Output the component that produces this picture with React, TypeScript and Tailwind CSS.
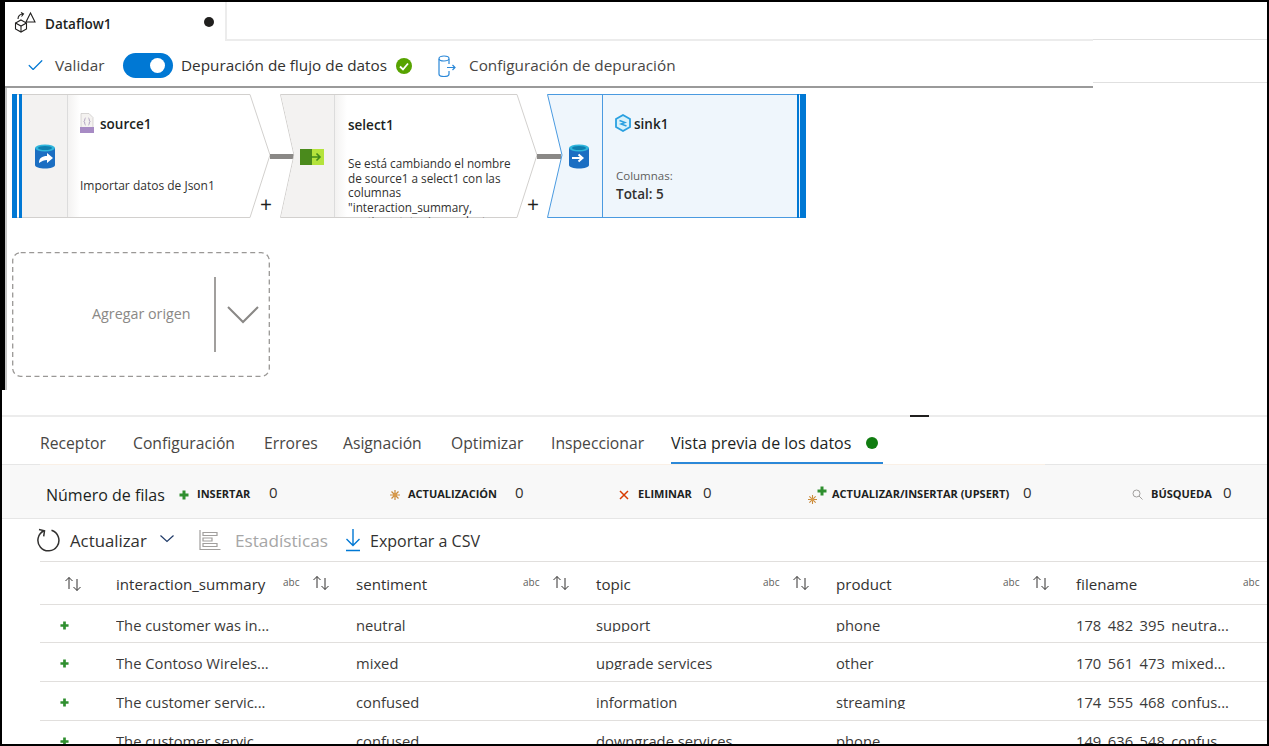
import { ReactNode } from 'react';
import { Check } from 'lucide-react';

const SortIcon = () => (
  <svg width="18" height="16" viewBox="0 0 18 16" fill="none" stroke="#323130" strokeWidth="1">
    <path d="M5 13V1.5M1.5 5L5 1.5 8.5 5" />
    <path d="M13 3v11.5M9.5 11l3.5 3.5 3.5-3.5" />
  </svg>
);

const PlusIcon = ({ size = 10 }: { size?: number }) => (
  <svg width={size} height={size} viewBox="0 0 10 10" fill="#2f8f2f">
    <path d="M3.5 0.5h3v3h3v3h-3v3h-3v-3h-3v-3h3z" />
  </svg>
);

const SunIcon = ({ size = 10 }: { size?: number }) => (
  <svg width={size} height={size} viewBox="0 0 10 10" stroke="#c98a3a" strokeWidth="1.2">
    <path d="M5 0v10M0 5h10M1.5 1.5l7 7M8.5 1.5l-7 7" />
    <circle cx="5" cy="5" r="2" fill="#d99a4a" stroke="none" />
  </svg>
);

const DataflowIcon = () => (
  <svg width="22" height="22" viewBox="0 0 22 22" fill="none" stroke="#201f1e" strokeWidth="1.100">
    <path d="M7 9l5.500 3v6L7 21l-5.500-3v-6z" />
    <path d="M1.500 12L7 15l5.500-3M7 15v6" />
    <path d="M16.500 2l-4.500 9h9z" fill="#fff" />
    <path d="M4 8c0-3 2-5 5-5M7 1.500L9.500 3 7.500 5.500" />
  </svg>
);

const SourceDbIcon = () => (
  <svg width="22" height="25" viewBox="0 0 22 25">
    <path d="M1 4v17c0 2 4.500 3.500 10 3.500s10-1.500 10-3.500V4z" fill="#1b6ec2" />
    <ellipse cx="11" cy="4" rx="10" ry="3.500" fill="#2fb5dc" />
    <ellipse cx="11" cy="4" rx="7" ry="2" fill="#0e7fb0" />
    <path d="M5 19c0-5 3-7 8-7V9l6 5-6 5v-3c-3 0-5 1-8 3z" fill="#fff" />
  </svg>
);

const JsonIcon = () => (
  <svg width="14" height="20" viewBox="0 0 14 20">
    <path d="M1 .5h8l4 4v15H1z" fill="#f4f2f0" stroke="#c8c6c4" strokeWidth=".7" />
    <path d="M5.500 5C4.500 5 5 8 4 8.500c1 .5.5 3.500 1.500 3.500M8.500 5c1 0 .5 3 1.500 3.500-1 .5-.5 3.500-1.500 3.500" fill="none" stroke="#8c7aa8" strokeWidth=".7" />
    <rect x="0" y="14" width="14" height="6" fill="#a78bc4" />
  </svg>
);

const SelectIcon = () => (
  <svg width="24" height="16" viewBox="0 0 24 16">
    <rect x="0" y="0" width="12" height="16" fill="#4a8a1c" />
    <rect x="12" y="0" width="12" height="16" fill="#b4e33c" />
    <path d="M11 8h9M16.500 4.500L20 8l-3.500 3.500" fill="none" stroke="#3f8a1a" strokeWidth="1.600" />
  </svg>
);

const SinkDbIcon = () => (
  <svg width="20" height="25" viewBox="0 0 20 25">
    <path d="M0 4v17c0 2 4.500 3.500 10 3.500s10-1.500 10-3.500V4z" fill="#1b6ec2" />
    <ellipse cx="10" cy="4" rx="10" ry="3.500" fill="#2fb5dc" />
    <ellipse cx="10" cy="4" rx="7" ry="2" fill="#0e7fb0" />
    <path d="M3 14h10M9.500 10.500L13.500 14l-4 3.500" fill="none" stroke="#fff" strokeWidth="2" />
  </svg>
);

const SinkHexIcon = () => (
  <svg width="16" height="18" viewBox="0 0 16 18">
    <path d="M8 1l7 4v8l-7 4-7-4V5z" fill="#d8f1fa" stroke="#2aa0e0" strokeWidth="1.800" />
    <path d="M4.500 6.500l5.500 2-4 1.500 5.500 2" fill="none" stroke="#2aa0e0" strokeWidth="1.400" />
  </svg>
);

const tabs = [
  { label: 'Receptor', width: 'w-[65px]' },
  { label: 'Configuración', width: 'w-[103px]' },
  { label: 'Errores', width: 'w-[51px]' },
  { label: 'Asignación', width: 'w-[80px]' },
  { label: 'Optimizar', width: 'w-[72px]' },
  { label: 'Inspeccionar', width: 'w-[92px]' },
];
const columns = ['interaction_summary', 'sentiment', 'topic', 'product', 'filename'];
const rows = [
  ['The customer was in...', 'neutral', 'support', 'phone', '178_482_395_neutra...'],
  ['The Contoso Wireles...', 'mixed', 'upgrade services', 'other', '170_561_473_mixed...'],
  ['The customer servic...', 'confused', 'information', 'streaming', '174_555_468_confus...'],
  ['The customer servic...', 'confused', 'downgrade services', 'phone', '149_636_548_confus...'],
];

const Stat = ({ icon, iconBox, label, labelBox, count, width }: { icon: ReactNode; iconBox: string; label: string; labelBox: string; count: string; width: string }) => (
  <div className={`flex items-center ${width}`}>
    <div className={`flex items-center ${iconBox}`}>{icon}</div>
    <span className={`text-[11px] font-bold text-[#201f1e] whitespace-nowrap ${labelBox}`}>{label}</span>
    <span className="text-[15px] text-[#323130] -mt-[5px]">{count}</span>
  </div>
);

export default function App() {
  return (
    <div className="w-[1269px] h-[746px] overflow-hidden bg-white border-2 border-black flex flex-col font-['Open_Sans',sans-serif] text-[#323130]">
      {/* Top part: tab, toolbar, canvas */}
      <div className="h-[388px] shrink-0 border-l-[3px] border-black flex flex-col">
        <div className="h-[39px] flex shrink-0">
          <div className="w-[222px] border-r-2 border-[#ececec] flex items-center pl-[9px] pt-[1px]">
            <DataflowIcon />
            <span className="ml-[9px] mt-[4px] text-[13.500px] font-semibold text-[#201f1e]">Dataflow1</span>
            <span className="ml-[92px] mb-[1px] w-[10px] h-[10px] rounded-full bg-[#201f1e]" />
          </div>
          <div className="w-[866px] border-b-2 border-[#ececec]" />
          <div className="flex-1 border-b border-[#e0e0e0] mb-[1px]" />
        </div>
        <div className="flex shrink-0">
          <div className="w-[1088px] h-[47px] border-b-2 border-[#9a9a9a] flex items-center pl-[21px] pt-[4px] text-[15.300px] text-[#484644]">
            <Check size={19} strokeWidth={1.500} className="text-[#0078d4]" />
            <span className="ml-[10px] w-[50px] whitespace-nowrap">Validar</span>
            <div className="ml-[18px] w-[50px] h-[25px] rounded-full bg-[#0078d4] flex items-center justify-end pr-[8px]">
              <span className="w-[15px] h-[15px] rounded-full bg-white" />
            </div>
            <span className="ml-[8px] w-[205px] whitespace-nowrap text-[#323130]">Depuración de flujo de datos</span>
            <svg className="ml-[10px]" width="16" height="16" viewBox="0 0 16 16">
              <circle cx="8" cy="8" r="8" fill="#57a300" />
              <path d="M4 8.500l3 3 5-6" fill="none" stroke="#fff" strokeWidth="1.800" />
            </svg>
            <svg className="ml-[25px]" width="20" height="22" viewBox="0 0 20 22" fill="none" stroke="#2b88d8" strokeWidth="1.200">
              <path d="M2 4v15c0 1.500 2 2.500 5 2.500s5-1 5-2.500v-3M12 9V4" />
              <ellipse cx="7" cy="3.500" rx="5" ry="2.500" />
              <path d="M10 12.500h8M15.500 10l2.500 2.500-2.500 2.500" />
            </svg>
            <span className="ml-[12px] whitespace-nowrap">Configuración de depuración</span>
          </div>
          <div className="flex-1 h-[42px] border-b border-[#e0e0e0]" />
        </div>

        {/* Canvas with the flow nodes */}
        <div className="relative flex-1 border-l-2 border-[#c4c4c4]">
          {/* source1 */}
          <div className="absolute left-[5px] top-[6px] w-[260px] h-[124px]">
            <svg className="absolute inset-0" width="260" height="124" viewBox="0 0 260 124">
              <defs>
                <linearGradient id="fade" x1="0" x2="1" y1="0" y2="0">
                  <stop offset="0" stopColor="#f3f2f1" />
                  <stop offset="1" stopColor="#f3f2f1" stopOpacity="0" />
                </linearGradient>
              </defs>
              <path d="M.5.5H238L258 61 238 123.500H.5z" fill="#fff" stroke="#d2d0ce" />
              <rect x="10" y="1" width="45" height="122" fill="#f3f2f1" />
              <rect x="56" y="1" width="12" height="122" fill="url(#fade)" />
              <path d="M55.500 1v122" stroke="#dcdcdc" />
              <rect x="0" y="0" width="5" height="124" fill="#0078d4" />
              <rect x="7" y="0" width="3" height="124" fill="#0078d4" />
            </svg>
            <div className="relative flex h-full">
              <div className="w-[55px] shrink-0 flex items-center justify-end pr-[11px] pt-[1px]"><SourceDbIcon /></div>
              <div className="pl-[13px] pt-[19px] flex flex-col">
                <div className="flex items-center gap-[6px] h-[20px]">
                  <JsonIcon />
                  <span className="mt-[3px] text-[13.500px] font-semibold text-[#201f1e]">source1</span>
                </div>
                <p className="mt-[45px] text-[12px] leading-[16px] whitespace-nowrap">Importar datos de Json1</p>
              </div>
            </div>
          </div>

          <div className="absolute left-[263px] top-[66px] w-[24px] h-[5px] bg-[#8a8886]" />
          <span className="absolute left-[253px] top-[102px] text-[21px] leading-[28px] text-[#201f1e]">+</span>

          {/* select1 */}
          <div className="absolute left-[273px] top-[6px] w-[258px] h-[124px]">
            <svg className="absolute inset-0" width="258" height="124" viewBox="0 0 258 124">
              <path d="M.5.5H237L257 61 237 123.500H.5L14 61z" fill="#fff" stroke="#d2d0ce" />
              <path d="M1 1H54V123H1L14.500 61z" fill="#f3f2f1" />
              <rect x="55" y="1" width="12" height="122" fill="url(#fade)" />
              <path d="M54.500 1v122" stroke="#dcdcdc" />
            </svg>
            <div className="relative flex h-full">
              <div className="w-[54px] shrink-0 flex items-center justify-end pr-[10px] pt-[1px]"><SelectIcon /></div>
              <div className="pl-[14px] pt-[19px] w-[186px] h-[124px] overflow-hidden flex flex-col">
                <div className="h-[20px] mt-[2px] flex items-center text-[13.500px] font-semibold text-[#201f1e]">select1</div>
                <p className="mt-[21px] text-[11.750px] leading-[14.500px]">Se está cambiando el nombre de source1 a select1 con las columnas "interaction_summary, sentiment, topic, product, filename"</p>
              </div>
            </div>
          </div>

          <div className="absolute left-[530px] top-[66px] w-[24px] h-[5px] bg-[#8a8886]" />
          <span className="absolute left-[520px] top-[102px] text-[21px] leading-[28px] text-[#201f1e]">+</span>

          {/* sink1 */}
          <div className="absolute left-[540px] top-[6px] w-[259px] h-[124px]">
            <svg className="absolute inset-0" width="259" height="124" viewBox="0 0 259 124">
              <path d="M.5.5H258.500V123.500H.5L15 61z" fill="#eff6fc" stroke="#4a9ae0" />
              <path d="M55.500 1v122" stroke="#4a9ae0" />
              <rect x="250" y="0" width="2" height="124" fill="#0078d4" />
              <rect x="253" y="0" width="6" height="124" fill="#0078d4" />
            </svg>
            <div className="relative flex h-full">
              <div className="w-[55px] shrink-0 flex items-center justify-end pr-[13px]"><SinkDbIcon /></div>
              <div className="pl-[14px] pt-[19px] flex flex-col">
                <div className="flex items-center gap-[3px] h-[20px] -ml-[1px]">
                  <SinkHexIcon />
                  <span className="mt-[3px] text-[13.500px] font-semibold text-[#201f1e]">sink1</span>
                </div>
                <p className="mt-[35px] text-[11.500px] leading-[16px] text-[#605e5c]">Columnas:</p>
                <p className="mt-[0px] text-[13.500px] font-semibold leading-[20px] text-[#323130]">Total: 5</p>
              </div>
            </div>
          </div>

          {/* Add source */}
          <div className="absolute left-[5px] top-[164px] w-[258px] h-[125px] flex items-center">
            <svg className="absolute inset-0" width="258" height="125" viewBox="0 0 258 125" fill="none">
              <rect x=".7" y=".7" width="256.600" height="123.600" rx="8" stroke="#9a9896" strokeWidth="1.300" strokeDasharray="5 3.500" />
            </svg>
            <span className="ml-[80px] mb-[2px] w-[122px] text-[14.300px] text-[#8a8886] whitespace-nowrap">Agregar origen</span>
            <span className="w-[2px] h-[75px] bg-[#a19f9d]" />
            <svg className="ml-[11px]" width="32" height="18" viewBox="0 0 32 18" fill="none" stroke="#8a8886" strokeWidth="2">
              <path d="M1 1l15 15L31 1" />
            </svg>
          </div>
        </div>
      </div>

      <div className="h-[25px] shrink-0" />

      {/* Resize divider */}
      <div className="h-[2px] shrink-0 bg-[#ececec] relative">
        <div className="absolute left-[908px] top-0 w-[19px] h-[2px] bg-[#201f1e]" />
      </div>

      {/* Bottom tabs */}
      <div className="h-[47px] shrink-0 flex pl-[38px] gap-[28px] text-[15.700px] text-[#484644]">
        {tabs.map((t) => (
          <div key={t.label} className={`flex items-center h-[45px] pt-[8px] whitespace-nowrap ${t.width}`}>{t.label}</div>
        ))}
        <div className="w-[212px] h-[47px] border-b-2 border-[#2b88d8] flex items-center pt-[8px] pb-[2px] text-[16px] text-[#201f1e] font-medium whitespace-nowrap">
          <span className="w-[184px]">Vista previa de los datos</span>
          <span className="ml-[11px] w-[12px] h-[12px] rounded-full bg-[#107c10]" />
        </div>
      </div>

      {/* Row counters */}
      <div className="relative h-[55px] shrink-0 bg-[#f8f8f8] border-y border-[#e6e6e6] flex items-center pl-[44px] pt-[6px]">
        <div className="absolute left-[38px] -top-px w-[1005px] h-px bg-[#faf0e6]" />
        <span className="w-[132px] text-[16px] text-[#201f1e] whitespace-nowrap">Número de filas</span>
        <Stat width="w-[212px]" iconBox="w-[19px] pl-[1px]" labelBox="w-[72px]" label="INSERTAR" count="0" icon={<PlusIcon />} />
        <Stat width="w-[228px]" iconBox="w-[18px]" labelBox="w-[107px]" label="ACTUALIZACIÓN" count="0" icon={<SunIcon />} />
        <Stat width="w-[190px]" iconBox="w-[20px] pl-[1px]" labelBox="w-[65px]" label="ELIMINAR" count="0"
          icon={<svg width="10" height="10" viewBox="0 0 10 10" stroke="#d83b01" strokeWidth="1.500"><path d="M1 1l8 8M9 1l-8 8" /></svg>} />
        <Stat width="w-[322px]" iconBox="w-[24px]" labelBox="w-[191px]" label="ACTUALIZAR/INSERTAR (UPSERT)" count="0"
          icon={<span className="relative block w-[20px] h-[18px]"><span className="absolute right-[1px] top-0"><PlusIcon /></span><span className="absolute left-0 bottom-0"><SunIcon size={9} /></span></span>} />
        <Stat width="w-[120px]" iconBox="w-[21px] pl-[2px]" labelBox="w-[72px]" label="BÚSQUEDA" count="0"
          icon={<svg width="11" height="11" viewBox="0 0 11 11" fill="none" stroke="#a19f9d" strokeWidth="1"><circle cx="4.500" cy="4.500" r="3.500" /><path d="M7 7l3.500 3.500" /></svg>} />
      </div>

      {/* Commands */}
      <div className="h-[42px] shrink-0 flex items-center pl-[35px] text-[16px]">
        <svg width="24" height="24" viewBox="0 0 24 24" fill="none" stroke="#323130" strokeWidth="1.500">
          <path d="M14.500 2.300A10.500 10.500 0 1 1 7 2.800" />
          <path d="M2 1.500l5.500 1.300-.8 5.500" />
        </svg>
        <span className="ml-[9px] w-[90px] mt-[1px] text-[16.800px] text-[#323130] whitespace-nowrap">Actualizar</span>
        <svg width="14" height="8" viewBox="0 0 14 8" fill="none" stroke="#1f3a68" strokeWidth="1.200" className="-mt-[3px]">
          <path d="M.5.5L7 6.500 13.500.5" />
        </svg>
        <svg className="ml-[25px]" width="22" height="20" viewBox="0 0 22 20" fill="none" stroke="#a19f9d" strokeWidth="1.200">
          <path d="M1 0v19.500h20.500" />
          <path d="M4 2.500h14v3H4zM4 8h9v3H4zM4 13.500h14v3H4z" />
        </svg>
        <span className="ml-[14px] w-[111px] mt-[1px] text-[17.200px] text-[#a6a6a6] font-medium whitespace-nowrap">Estadísticas</span>
        <svg width="16" height="24" viewBox="0 0 16 24" fill="none" stroke="#0078d4" strokeWidth="1.400" className="-ml-[1px]">
          <path d="M8 1v16M1.500 11l6.500 6.500L14.500 11M1 22.500h14" />
        </svg>
        <span className="ml-[9px] mt-[1px] text-[#323130] whitespace-nowrap">Exportar a CSV</span>
      </div>

      {/* Preview table */}
      <div className="ml-[38px]">
        <div className="grid grid-cols-[76px_repeat(5,240px)] h-[44px] border-y border-[#e1dfdd] items-center">
          <div className="pl-[24px] pt-[2px]"><SortIcon /></div>
          {columns.map((c, i) => (
            <div key={c} className="flex items-center h-full relative pt-[2px]">
              <span className="text-[15.100px] font-medium text-[#323130]">{c}</span>
              <span className="absolute left-[167px] top-0 h-full flex items-center pb-[1px] text-[10px] text-[#605e5c]">abc</span>
              {i < 4 && <span className="absolute left-[196px] top-0 h-full flex items-center"><SortIcon /></span>}
            </div>
          ))}
        </div>
        {rows.map((r, i) => (
          <div key={i} className={`grid grid-cols-[76px_repeat(5,240px)] border-b border-[#e1dfdd] items-center ${i === 0 ? 'h-[38px]' : 'h-[39px]'}`}>
            <div className="pl-[20px] pt-[3px]"><PlusIcon size={9} /></div>
            {r.map((v, j) => (
              <div key={j} className="h-[17px] mb-[1px] overflow-hidden text-[14.750px] leading-[20px] text-[#3b3a39] whitespace-nowrap">{v}</div>
            ))}
          </div>
        ))}
      </div>
    </div>
  );
}
